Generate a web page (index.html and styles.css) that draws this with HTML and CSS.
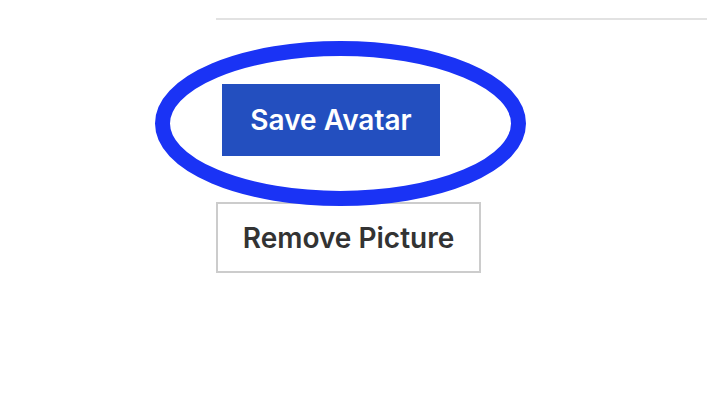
FILE: index.html
```html
<!DOCTYPE html>
<html>
<head>
<meta charset="utf-8">
<link rel="stylesheet" href="styles.css">
</head>
<body>
<div class="page">
  <div class="divider"></div>
  <div class="actions">
    <button class="btn btn-primary">Save Avatar</button>
    <button class="btn btn-outline">Remove Picture</button>
  </div>
  <svg class="highlight" width="708" height="408" viewBox="0 0 708 408">
    <ellipse cx="340.5" cy="123.5" rx="178" ry="75" fill="none" stroke="#1a33f5" stroke-width="15"/>
  </svg>
</div>
</body>
</html>
```
FILE: styles.css
```css
html, body {
  margin: 0;
  padding: 0;
  background: #fff;
}
.page {
  position: relative;
  width: 708px;
  height: 408px;
  padding: 18px 0 0 216px;
  box-sizing: border-box;
  font-family: Inter, "Noto Sans", sans-serif;
}
.divider {
  height: 2px;
  background: #e2e2e2;
  width: 491px;
}
.actions {
  display: flex;
  flex-direction: column;
  align-items: flex-start;
  gap: 46px;
  padding-top: 64px;
}
.btn {
  font-family: inherit;
  font-weight: 600;
  font-size: 28px;
  box-sizing: border-box;
  margin: 0;
  padding: 0;
  cursor: pointer;
}
.btn-primary {
  margin-left: 6px;
  width: 218px;
  height: 72px;
  background: #234fbf;
  color: #fff;
  border: none;
}
.btn-outline {
  width: 265px;
  height: 71px;
  background: #fff;
  color: #333;
  border: 2px solid #cccccc;
}
.highlight {
  position: absolute;
  left: 0;
  top: 0;
  pointer-events: none;
}
```
